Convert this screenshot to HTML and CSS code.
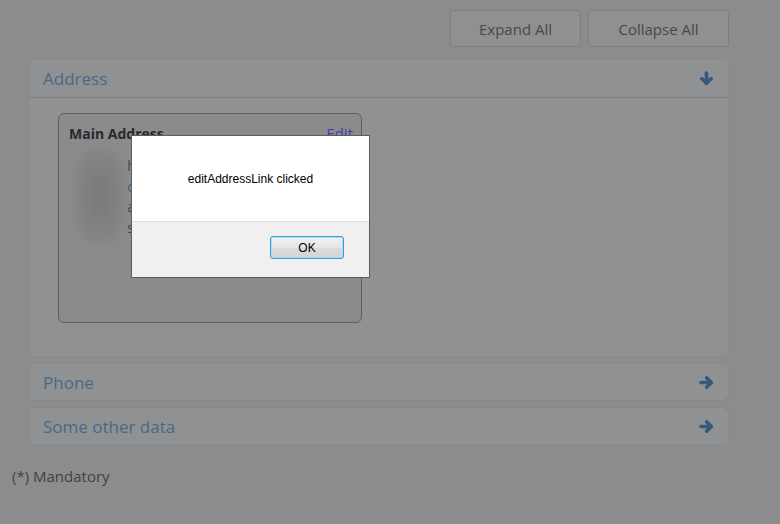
FILE: index.html
```html
<!DOCTYPE html>
<html>
<head>
<meta charset="utf-8">
<link rel="stylesheet" href="styles.css">
</head>
<body>
<div class="page">
  <div class="toolbar">
    <button class="tbtn">Expand All</button>
    <button class="tbtn tbtn-wide">Collapse All</button>
  </div>

  <section class="panel panel-open">
    <div class="panel-head">
      <span class="panel-title">Address</span>
      <svg class="arrow" width="15" height="15" viewBox="0 0 15 15"><g fill="none" stroke="#345a7d" stroke-width="3.6" stroke-linecap="round" stroke-linejoin="round"><path d="M7.5 2v10"/><path d="M2.8 7.6l4.7 4.7 4.7-4.7"/></g></svg>
    </div>
    <div class="panel-body">
      <div class="card">
        <div class="card-head">
          <span class="card-title">Main Address</span>
          <span class="card-edit">Edit</span>
        </div>
        <div class="card-content">
          <div class="photo"></div>
          <div class="lines">
            <div class="line">h</div>
            <div class="line line-blue">c</div>
            <div class="line">a</div>
            <div class="line">s</div>
          </div>
        </div>
      </div>
    </div>
  </section>

  <section class="panel">
    <div class="panel-head panel-head-closed">
      <span class="panel-title">Phone</span>
      <svg class="arrow" width="15" height="15" viewBox="0 0 15 15"><g fill="none" stroke="#345a7d" stroke-width="3.6" stroke-linecap="round" stroke-linejoin="round"><path d="M2 7.5h10"/><path d="M7.6 2.8l4.7 4.7-4.7 4.7"/></g></svg>
    </div>
  </section>

  <section class="panel">
    <div class="panel-head panel-head-closed panel-head-tall">
      <span class="panel-title">Some other data</span>
      <svg class="arrow" width="15" height="15" viewBox="0 0 15 15"><g fill="none" stroke="#345a7d" stroke-width="3.6" stroke-linecap="round" stroke-linejoin="round"><path d="M2 7.5h10"/><path d="M7.6 2.8l4.7 4.7-4.7 4.7"/></g></svg>
    </div>
  </section>

  <div class="mandatory">(*) Mandatory</div>
</div>

<div class="dialog">
  <div class="dialog-msg">editAddressLink clicked</div>
  <div class="dialog-foot">
    <button class="ok">OK</button>
  </div>
</div>
</body>
</html>
```

FILE: styles.css
```css
html, body {
  margin: 0;
  padding: 0;
}
body {
  background: #8b8c8d;
  width: 780px;
  height: 524px;
  overflow: hidden;
  font-family: "Open Sans", "Liberation Sans", sans-serif;
  position: relative;
}
.page {
  padding: 10px 51px 0 12px;
}
.toolbar {
  display: flex;
  justify-content: flex-end;
  gap: 7px;
  margin-bottom: 11px;
}
.tbtn {
  width: 131px;
  height: 37px;
  background: #8f9092;
  border: 1px solid #7e7f81;
  border-radius: 3px;
  font-family: "Open Sans", sans-serif;
  font-size: 15px;
  color: #4b4844;
  padding: 0;
}
.tbtn-wide {
  width: 141px;
}
.panel {
  margin-left: 16px;
  background: #909193;
  border: 1px solid #87888a;
  border-radius: 6px;
  margin-bottom: 6px;
}
.panel-head {
  height: 38px;
  border-bottom: 1px solid #7f8082;
  display: flex;
  align-items: center;
  justify-content: space-between;
  padding: 0 14px 0 14px;
}
.panel-head-closed {
  border-bottom: none;
  height: 36px;
}
.panel-head-tall {
  height: 37px;
}
.panel-title {
  font-size: 17px;
  color: #476988;
}
.arrow {
  display: block;
}
.panel-body {
  padding: 15px 30px 33px 29px;
}
.card {
  width: 302px;
  height: 208px;
  background: #8a8b8d;
  border: 1px solid #5d5e60;
  border-radius: 6px;
  box-sizing: content-box;
}
.card-head {
  display: flex;
  justify-content: space-between;
  align-items: center;
  padding: 8px 8px 0 10px;
  height: 22px;
}
.card-title {
  font-size: 14px;
  font-weight: bold;
  color: #2a2a2a;
}
.card-edit {
  font-size: 15px;
  color: #40409c;
}
.card-content {
  display: flex;
  padding: 3px 0 0 14px;
}
.photo {
  width: 54px;
  height: 98px;
  background: radial-gradient(ellipse at 50% 50%, #7b7c7d 20%, #838485 60%, #8e8f90 100%);
  filter: blur(2px);
}
.lines {
  padding-top: 8px;
  padding-left: 0;
}
.line {
  font-size: 15px;
  line-height: 20.5px;
  color: #3a3a3a;
}
.line-blue {
  color: #345a7d;
}
.mandatory {
  margin-top: 20px;
  font-size: 15px;
  color: #45423e;
}
.dialog {
  position: absolute;
  left: 131px;
  top: 135px;
  width: 237px;
  height: 141px;
  border: 1px solid #5c5c5c;
  background: #ffffff;
  display: flex;
  flex-direction: column;
  font-family: "Liberation Sans", Arial, sans-serif;
}
.dialog-msg {
  height: 85px;
  border-bottom: 1px solid #dfdfdf;
  font-size: 12px;
  color: #000;
  text-align: center;
  line-height: 86px;
}
.dialog-foot {
  flex: 1;
  background: #f0f0f0;
  display: flex;
  justify-content: flex-end;
  align-items: flex-start;
  padding: 14px 25px 0 0;
}
.ok {
  width: 74px;
  height: 23px;
  border: 1px solid #3c9ad6;
  border-radius: 3px;
  background: linear-gradient(#f2f2f2, #e6e6e6 50%, #dcdcdc 51%, #d4d4d4);
  box-shadow: inset 0 0 0 1px #a8def7;
  font-family: "Liberation Sans", Arial, sans-serif;
  font-size: 12px;
  color: #000;
  padding: 0;
}
```
